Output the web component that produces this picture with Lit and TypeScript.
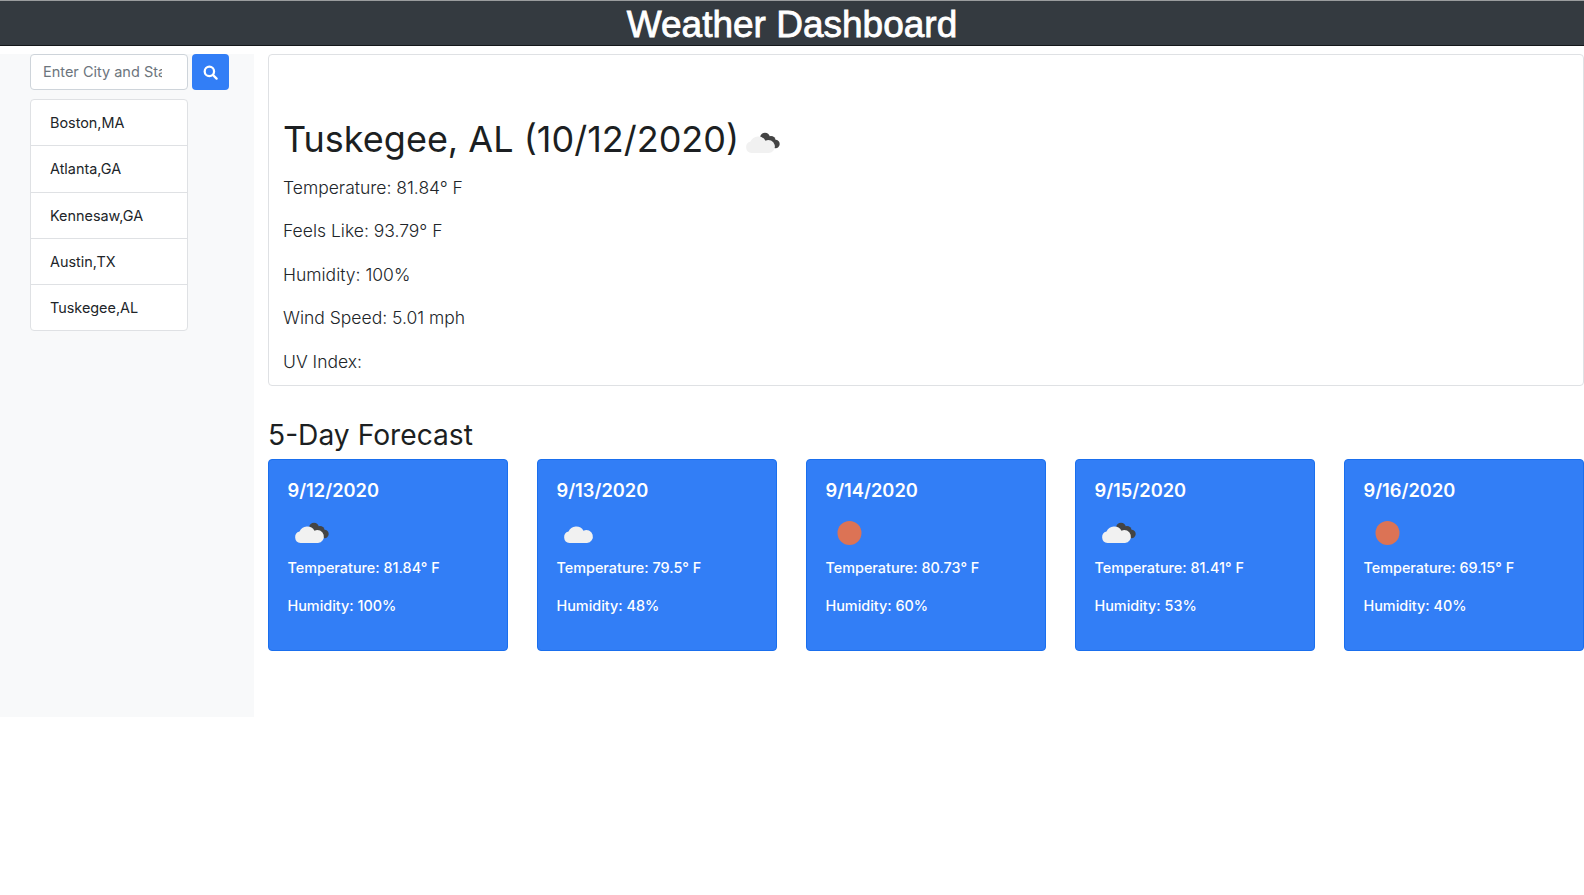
import { LitElement, html, css, svg } from "lit";
import { customElement } from "lit/decorators.js";

type Day = { date: string; icon: "cloud" | "dark" | "sun"; temp: string; hum: string };

const cities = ["Boston,MA", "Atlanta,GA", "Kennesaw,GA", "Austin,TX", "Tuskegee,AL"];
const stats = ["Temperature: 81.84° F", "Feels Like: 93.79° F", "Humidity: 100%", "Wind Speed: 5.01 mph", "UV Index:"];
const days: Day[] = [
  { date: "9/12/2020", icon: "dark", temp: "81.84", hum: "100" },
  { date: "9/13/2020", icon: "cloud", temp: "79.5", hum: "48" },
  { date: "9/14/2020", icon: "sun", temp: "80.73", hum: "60" },
  { date: "9/15/2020", icon: "dark", temp: "81.41", hum: "53" },
  { date: "9/16/2020", icon: "sun", temp: "69.15", hum: "40" },
];

const cloudShape = "M12.500 30A5.800 5.800 0 0 1 11.500 18.600A8.400 8.400 0 0 1 26.500 17.700A6.500 6.500 0 1 1 30 30Z";

function weatherIcon(kind: Day["icon"]) {
  return html`<svg class="wicon" viewBox="0 0 50 40" aria-hidden="true">
    ${kind === "sun"
      ? svg`<circle cx="23.500" cy="20" r="12" fill="#dc7355"></circle>`
      : svg`
        ${kind === "dark"
          ? svg`<g fill="#444"><circle cx="26" cy="14.500" r="4.800"></circle><circle cx="32" cy="17.500" r="4.600"></circle><circle cx="36.500" cy="21" r="4.200"></circle></g>`
          : ""}
        <path d=${cloudShape} fill="#f1f1f1"></path>`}
  </svg>`;
}

@customElement("app-root")
export class AppRoot extends LitElement {
  static styles = css`
    :host {
      display: block;
      min-height: 895px;
      background: #fff;
      font-family: Inter, "Liberation Sans", sans-serif;
      color: #212529;
    }
    * {
      box-sizing: border-box;
    }
    .top {
      height: 46px;
      background: #343a40;
      border-top: 1px solid #9a9c9e;
      border-bottom: 1px solid #14171a;
      color: #fff;
      text-align: center;
      font-family: "Liberation Sans", sans-serif;
      font-size: 37px;
      line-height: 47px;
      -webkit-text-stroke: 0.8px #fff;
    }
    .page {
      display: flex;
      align-items: flex-start;
      margin-top: 8px;
      gap: 14px;
    }
    .side {
      width: 254px;
      height: 663px;
      flex: none;
      background: #f8f9fa;
      padding-left: 30px;
    }
    .search {
      display: flex;
      gap: 4px;
    }
    .search input {
      width: 158px;
      height: 36px;
      padding: 0 25px 2px 12px;
      border: 1px solid #ced4da;
      border-radius: 4px;
      font: 300 14.500px Inter, sans-serif;
      background: #fff;
      outline: none;
    }
    .search input::placeholder {
      color: #6c757d;
      opacity: 1;
      font-weight: 400;
    }
    .search button {
      width: 37px;
      height: 36px;
      border: 0;
      border-radius: 4px;
      background: #327ef6;
      padding: 0;
      display: flex;
      align-items: center;
      justify-content: center;
    }
    .list {
      width: 158px;
      margin-top: 9px;
      background: #fff;
      border: 1px solid #dfe1e4;
      border-radius: 4px;
    }
    .list div {
      height: 46.250px;
      line-height: 46px;
      padding-left: 19px;
      font-size: 14.400px;
      border-top: 1px solid #dfe1e4;
    }
    .list div:first-child {
      border-top: 0;
      height: 45.250px;
    }
    main {
      flex: 1;
      min-width: 0;
    }
    .current {
      height: 332px;
      border: 1px solid #dfe1e4;
      border-radius: 4px;
      padding: 59px 14px 0;
    }
    h2 {
      margin: 0;
      font-weight: 400;
      font-size: 36px;
      line-height: 50px;
      display: flex;
      align-items: center;
      color: #1c1f22;
    }
    h2 .wicon {
      width: 50px;
      height: 40px;
      margin: 8px 0 0 0;
    }
    .current p {
      margin: 0;
      height: 43.400px;
      font-size: 17.500px;
      font-weight: 300;
      line-height: 26px;
    }
    .current h2 + p {
      margin-top: 11px;
    }
    h3 {
      margin: 27px 0 0;
      font-weight: 400;
      font-size: 28.200px;
      line-height: 44px;
      color: #1c1f22;
    }
    .cards {
      display: flex;
      justify-content: space-between;
      margin-top: 2px;
    }
    .card {
      width: 240px;
      height: 192px;
      background: #327ef6;
      border: 1px solid #1a6fee;
      border-radius: 4px;
      padding: 17px 18.500px 0;
      color: #fff;
    }
    .card h5 {
      margin: 0;
      font-size: 18.300px;
      font-weight: 600;
      line-height: 27px;
    }
    .card .wicon {
      display: block;
      width: 50px;
      height: 40px;
      margin-top: 9px;
    }
    .card p {
      margin: 0;
      font-size: 14.400px;
      font-weight: 500;
      line-height: 22px;
    }
    .card p + p {
      margin-top: 15.500px;
    }
    .card .wicon + p {
      margin-top: 4px;
    }
  `;

  render() {
    return html`
      <header class="top">Weather Dashboard</header>
      <div class="page">
        <aside class="side">
          <div class="search">
            <input placeholder="Enter City and State" />
            <button aria-label="Search">
              <svg width="15" height="15" viewBox="0 0 16 16" fill="none" stroke="#fff" stroke-width="2.400" stroke-linecap="round">
                <circle cx="6.800" cy="6.800" r="5"></circle>
                <path d="M10.500 10.500 14.500 14.500"></path>
              </svg>
            </button>
          </div>
          <div class="list">${cities.map((c) => html`<div>${c}</div>`)}</div>
        </aside>
        <main>
          <section class="current">
            <h2>Tuskegee, AL (10/12/2020) ${weatherIcon("dark")}</h2>
            ${stats.map((s) => html`<p>${s}</p>`)}
          </section>
          <h3>5-Day Forecast</h3>
          <div class="cards">
            ${days.map(
              (d) => html`<div class="card">
                <h5>${d.date}</h5>
                ${weatherIcon(d.icon)}
                <p>Temperature: ${d.temp}° F</p>
                <p>Humidity: ${d.hum}%</p>
              </div>`
            )}
          </div>
        </main>
      </div>
    `;
  }
}
